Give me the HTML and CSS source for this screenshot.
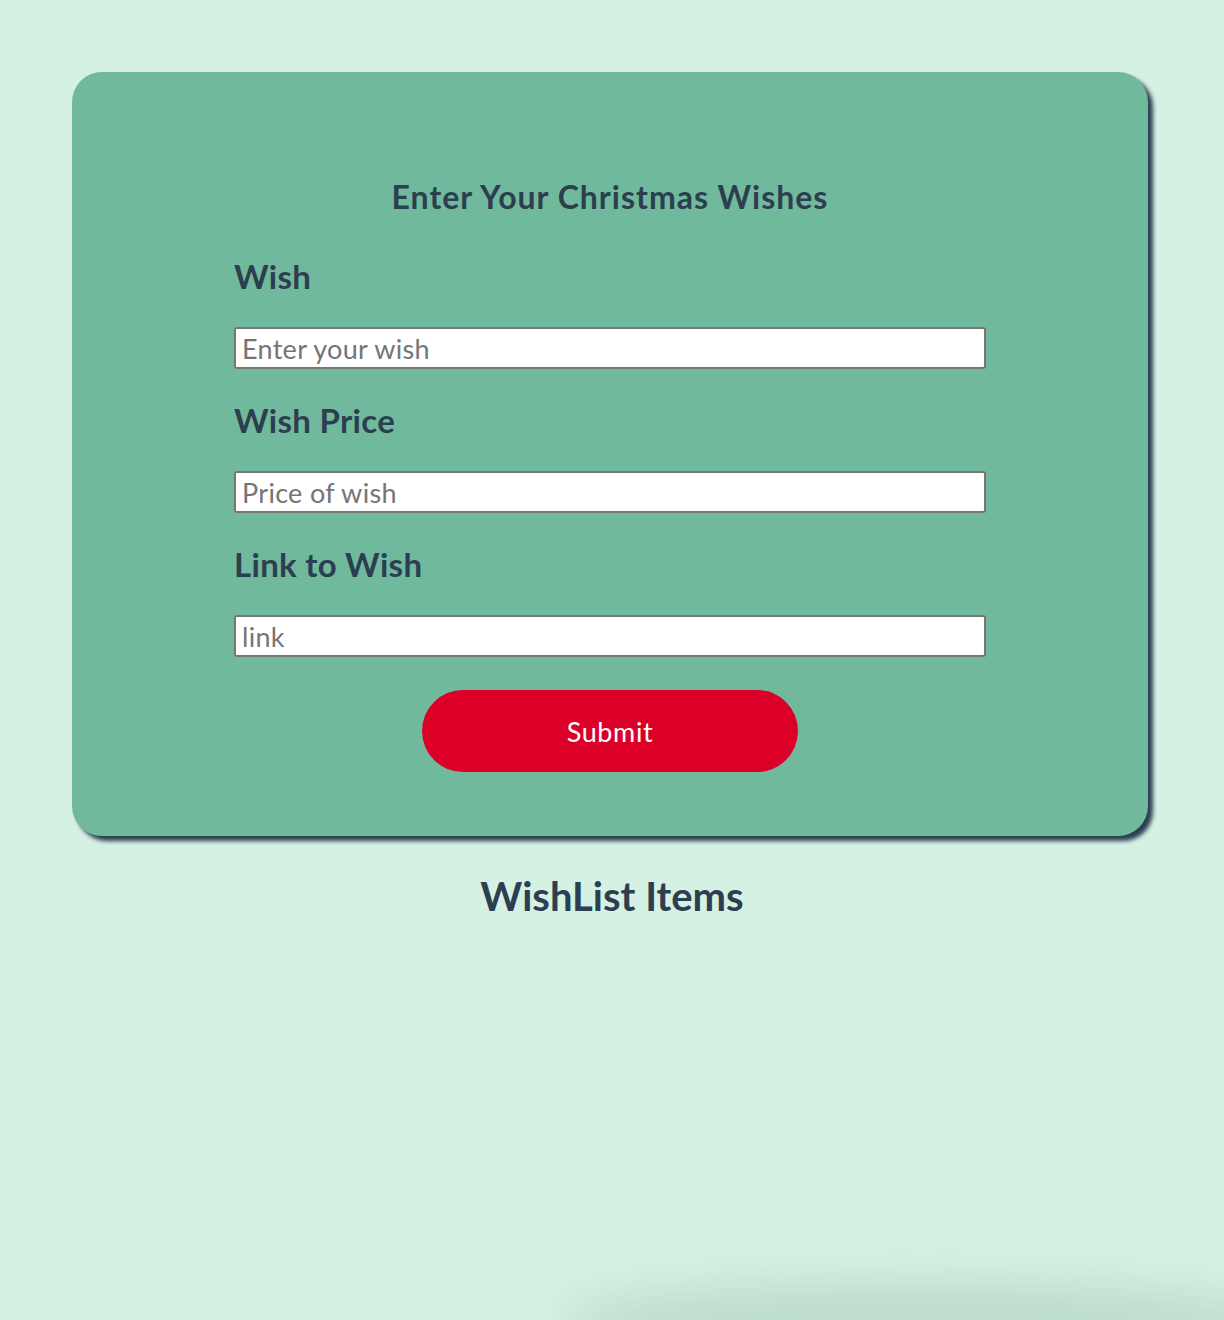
FILE: index.html
```html
<!DOCTYPE html>
<html lang="en">
<head>
<meta charset="utf-8">
<title>Christmas Wishlist</title>
<link rel="stylesheet" href="styles.css">
</head>
<body>
<main class="page">
  <section class="card">
    <form class="wish-form">
      <h2 class="form-title">Enter Your Christmas Wishes</h2>
      <label class="field-label" for="wish">Wish</label>
      <input class="field-input" id="wish" type="text" placeholder="Enter your wish">
      <label class="field-label" for="price">Wish Price</label>
      <input class="field-input" id="price" type="text" placeholder="Price of wish">
      <label class="field-label" for="link">Link to Wish</label>
      <input class="field-input" id="link" type="text" placeholder="link">
      <button class="submit-btn" type="button">Submit</button>
    </form>
  </section>
  <h1 class="list-title">WishList Items</h1>
</main>
<div class="bottom-shade"></div>
</body>
</html>
```
FILE: styles.css
```css
html, body {
  margin: 0;
  padding: 0;
}
body {
  background: #d5f1e3;
  font-family: "Lato", "Open Sans", sans-serif;
  color: #2c3e50;
  min-height: 1320px;
  position: relative;
  overflow: hidden;
}
.page {
  display: flex;
  flex-direction: column;
  align-items: center;
  padding-top: 72px;
}
.card {
  box-sizing: border-box;
  width: 1076px;
  margin-left: -4px;
  background: #70b99d;
  border-radius: 30px;
  box-shadow: 5px 5px 4px #2c3e50;
  padding: 107px 0 64px;
}
.wish-form {
  width: 752px;
  margin: 0 auto;
  display: flex;
  flex-direction: column;
}
.form-title {
  margin: 0 0 43px;
  font-size: 32px;
  line-height: 36px;
  font-weight: 700;
  letter-spacing: 1px;
  text-align: center;
}
.field-label {
  font-size: 33px;
  line-height: 36px;
  font-weight: 700;
  letter-spacing: 0.3px;
  margin-bottom: 33px;
}
.field-input {
  box-sizing: border-box;
  height: 42px;
  width: 100%;
  border: 2px solid #767676;
  border-radius: 3px;
  background: #fff;
  padding: 0 6px;
  font-family: inherit;
  font-size: 27px;
  letter-spacing: 0.3px;
  color: #333;
  margin-bottom: 33px;
}
.field-input::placeholder {
  color: #757575;
}
.submit-btn {
  align-self: center;
  width: 376px;
  height: 82px;
  border: none;
  border-radius: 41px;
  background: #dc0028;
  color: #fff;
  font-family: inherit;
  font-size: 27px;
  letter-spacing: 0.6px;
  cursor: pointer;
}
.list-title {
  margin: 38px 0 0;
  font-size: 40px;
  line-height: 44px;
  font-weight: 700;
  text-align: center;
}
.bottom-shade {
  position: absolute;
  left: 560px;
  right: -60px;
  bottom: -40px;
  height: 80px;
  border-radius: 50%;
  background: rgba(60, 110, 80, 0.15);
  filter: blur(22px);
}
```
